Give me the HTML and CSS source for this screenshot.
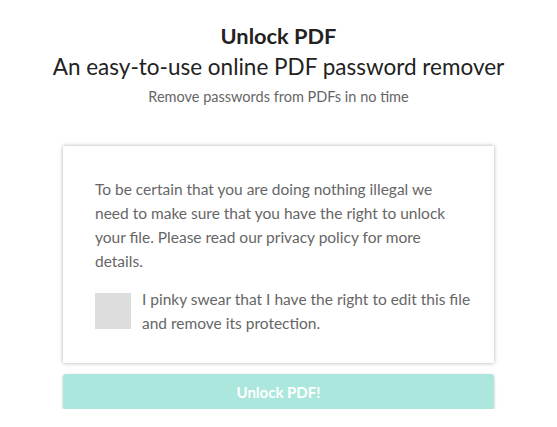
FILE: index.html
```html
<!DOCTYPE html>
<html>
<head>
<meta charset="utf-8">
<link rel="stylesheet" href="styles.css">
</head>
<body>
<div class="page">
  <header class="hero">
    <h1 class="title">Unlock PDF</h1>
    <h2 class="subtitle">An easy-to-use online PDF password remover</h2>
    <p class="lead">Remove passwords from PDFs in no time</p>
  </header>
  <section class="card">
    <p class="notice">To be certain that you are doing nothing illegal we need to make sure that you have the right to unlock your file. Please read our privacy policy for more details.</p>
    <label class="check">
      <span class="box"></span>
      <span class="check-text">I pinky swear that I have the right to edit this file and remove its protection.</span>
    </label>
  </section>
  <button class="btn">Unlock PDF!</button>
</div>
</body>
</html>
```
FILE: styles.css
```css
html, body { margin: 0; padding: 0; background: #fff; }
body { font-family: Lato, "Source Sans Pro", sans-serif; color: #666; }
.page { width: 431px; margin: 0 auto; padding-top: 22px; display: flex; flex-direction: column; align-items: stretch; }
.hero { text-align: center; margin: 0 -60px; }
.title { margin: 0; font-size: 21.8px; font-weight: 700; color: #222; line-height: 28px; }
.subtitle { margin: 2px 0 0; font-size: 22.5px; font-weight: 400; color: #222; line-height: 30px; }
.lead { margin: 5px 0 0; font-size: 14.5px; color: #666; line-height: 20px; }
.card { margin-top: 39px; background: #fff; box-shadow: 0 0 4px rgba(0,0,0,0.32); padding: 31px 22px 28px 32px; }
.notice { margin: 0 10px 0 0; font-size: 15.5px; line-height: 24px; }
.check { display: flex; gap: 11px; margin-top: 20px; align-items: flex-start; }
.box { flex: none; width: 36px; height: 36px; background: #ddd; }
.check-text { font-size: 15.5px; line-height: 24px; margin-top: -6px; }
.btn { margin-top: 11px; height: 35px; border: none; border-radius: 3px; background: #abe7dd; color: #fff; font-family: inherit; font-weight: 700; font-size: 15px; box-shadow: 0 1px 3px rgba(0,0,0,0.25); }
```
